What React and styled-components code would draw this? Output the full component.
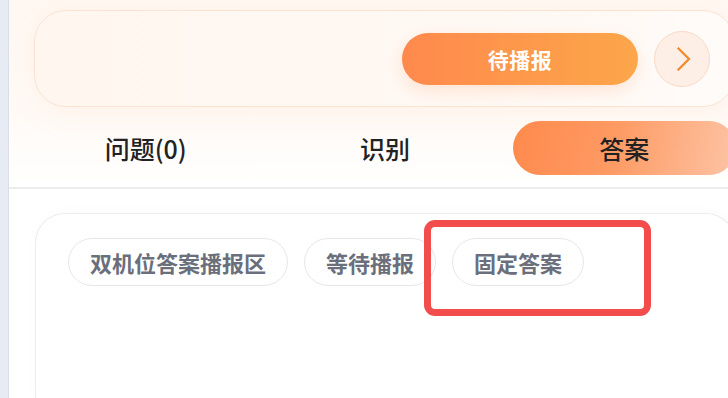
import styled, { createGlobalStyle } from 'styled-components';

const GlobalStyle = createGlobalStyle`
  html, body {
    margin: 0;
    padding: 0;
    background: #ffffff;
    font-family: "Noto Sans CJK SC", "Noto Sans", sans-serif;
  }
  * { box-sizing: border-box; }
`;

function Chevron() {
  return (
    <svg width="24" height="24" viewBox="0 0 24 24" fill="none">
      <path d="M7.5 1.5 L18 12 L7.5 22.5" stroke="#f0892a" strokeWidth="2.2" strokeLinecap="square" strokeLinejoin="miter" />
    </svg>
  );
}

export default function App() {
  const tabs = [
    { label: '问题(0)', active: false },
    { label: '识别', active: false },
    { label: '答案', active: true },
  ];
  const chips = ['双机位答案播报区', '等待播报', '固定答案'];

  return (
    <Page>
      <GlobalStyle />
      <Sidebar />
      <Main>
        <Header>
          <StatusCard>
            <PrimaryButton>待播报</PrimaryButton>
            <RoundButton><Chevron /></RoundButton>
          </StatusCard>
          <Tabs>
            {tabs.map((t) => (
              <Tab key={t.label} $active={t.active}>{t.label}</Tab>
            ))}
          </Tabs>
        </Header>
        <Divider />
        <ContentCard>
          <ChipRow>
            {chips.map((c) => (
              <Chip key={c}>{c}</Chip>
            ))}
          </ChipRow>
        </ContentCard>
        <Highlight />
      </Main>
    </Page>
  );
}

const Page = styled.div`
  display: flex;
  width: 728px;
  height: 398px;
  overflow: hidden;
  background: #ffffff;
`;

const Sidebar = styled.div`
  flex: 0 0 9px;
  background: #e6ebf4;
  border-right: 1px solid #d9dee7;
`;

const Main = styled.div`
  position: relative;
  flex: 0 0 726px;
  display: flex;
  flex-direction: column;
`;

const Header = styled.div`
  padding-top: 10px;
  background: linear-gradient(180deg, #fff7f1 0%, #fffaf6 60%, #ffffff 100%);
  height: 187px;
`;

const StatusCard = styled.div`
  margin-left: 25px;
  width: 701px;
  height: 97px;
  border: 1.5px solid #fbe3d2;
  border-radius: 32px;
  background: linear-gradient(90deg, #fff6ef 0%, #fff8f3 60%, #fffbf8 100%);
  box-shadow: 0 8px 30px rgba(255, 150, 90, 0.08);
  display: flex;
  align-items: center;
  justify-content: flex-end;
  gap: 16px;
  padding-right: 24px;
`;

const PrimaryButton = styled.button`
  width: 236px;
  height: 52px;
  border: none;
  border-radius: 26px;
  background: linear-gradient(90deg, #ff894d 0%, #fd9b4b 60%, #fca64a 100%);
  box-shadow: 0 6px 16px rgba(255, 140, 80, 0.18);
  color: #ffffff;
  font-family: inherit;
  font-size: 21px;
  font-weight: 700;
  letter-spacing: 0.5px;
  cursor: pointer;
`;

const RoundButton = styled.button`
  width: 56px;
  height: 56px;
  border-radius: 50%;
  border: 1.5px solid #f9d9c5;
  background: #fdefe6;
  display: flex;
  align-items: center;
  justify-content: center;
  padding: 0 0 0 2px;
  cursor: pointer;
`;

const Tabs = styled.div`
  margin-top: 14px;
  margin-left: 17px;
  width: 718px;
  height: 54px;
  display: grid;
  grid-template-columns: repeat(3, 1fr);
`;

const Tab = styled.div`
  margin: 0 8px;
  border-radius: 27px;
  display: flex;
  align-items: center;
  justify-content: center;
  font-size: 25px;
  font-weight: 500;
  color: #222222;
  background: ${(p) => (p.$active ? 'linear-gradient(100deg, #ff8a4d 0%, #fe9a63 45%, #fdc4a5 100%)' : 'transparent')};
`;

const Divider = styled.div`
  height: 2px;
  background: #ececec;
`;

const ContentCard = styled.div`
  margin-top: 24px;
  margin-left: 26px;
  width: 701px;
  flex: 1;
  border: 1.5px solid #ededed;
  border-bottom: none;
  border-radius: 30px 30px 0 0;
  box-shadow: 0 -2px 12px rgba(0, 0, 0, 0.02);
  padding: 24px 0 0 32px;
`;

const ChipRow = styled.div`
  display: flex;
  gap: 16px;
`;

const Chip = styled.div`
  height: 48px;
  padding: 0 21px;
  border: 1.5px solid #e7e7e9;
  border-radius: 24px;
  display: flex;
  align-items: center;
  font-size: 22px;
  font-weight: 700;
  color: #6b6f7b;
  white-space: nowrap;
`;

const Highlight = styled.div`
  position: absolute;
  left: 415px;
  top: 220px;
  width: 227px;
  height: 96px;
  border: 7px solid #f24c4c;
  border-radius: 11px;
  pointer-events: none;
`;
